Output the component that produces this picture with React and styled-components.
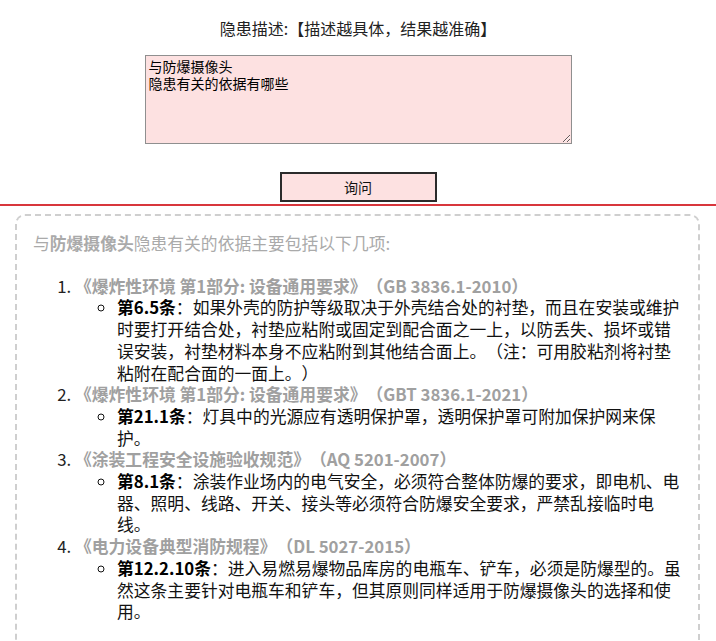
import styled, { createGlobalStyle } from "styled-components";

const GlobalStyle = createGlobalStyle`
body{
  margin: 0;
  background: #fff;
  color: #111;
  font-family: "Noto Sans CJK SC", "Noto Sans", sans-serif;
  text-spacing-trim: space-all;
}
`

const Header = styled.div`
display: flex;
flex-direction: column;
align-items: center;
padding-top: 18px;
padding-bottom: 2px;
border-bottom: 2px solid #d8363c;
`

const Title = styled.h1`
margin: 0;
font-size: 16px;
line-height: 20px;
font-weight: 400;
color: #222;
`

const Question = styled.textarea`
box-sizing: border-box;
margin-top: 17px;
width: 427px;
height: 89px;
padding: 2px 3px;
border: 1px solid #8f8f8f;
background: #fde1e1;
color: #000;
font-family: inherit;
font-size: 14px;
line-height: 16.5px;
resize: both;
outline: none;
`

const AskButton = styled.button`
box-sizing: border-box;
margin-top: 28px;
width: 157px;
height: 30px;
border: 2px solid #2b2b2b;
background: #fde1e1;
color: #111;
font-family: inherit;
font-size: 14px;
cursor: pointer;
`

const Answer = styled.div`
margin: 8px 16px 0 15px;
padding: 17px 15px 40px 16px;
border: 2px dashed #cfcfcf;
border-radius: 10px;
font-size: 16.8px;
line-height: 21.7px;
`

const Intro = styled.p`
margin: 0 0 21px;
color: #aaa;

b{
    font-weight: 700;
}
`

const Laws = styled.ol`
margin: 0;
padding-left: 42px;
color: #222;
`

const LawName = styled.span`
font-weight: 700;
color: #a0a0a0;
`

const Clauses = styled.ul`
margin: 0;
padding-left: 42px;
list-style: circle;
color: #111;
`

const ClauseNo = styled.b`
font-weight: 700;
color: #000;
`

const laws = [
    {
        name: '《爆炸性环境 第1部分: 设备通用要求》（GB 3836.1-2010）',
        no: '第6.5条',
        text: '如果外壳的防护等级取决于外壳结合处的衬垫，而且在安装或维护时要打开结合处，衬垫应粘附或固定到配合面之一上，以防丢失、损坏或错误安装，衬垫材料本身不应粘附到其他结合面上。（注：可用胶粘剂将衬垫粘附在配合面的一面上。）'
    },
    {
        name: '《爆炸性环境 第1部分: 设备通用要求》（GBT 3836.1-2021）',
        no: '第21.1条',
        text: '灯具中的光源应有透明保护罩，透明保护罩可附加保护网来保护。'
    },
    {
        name: '《涂装工程安全设施验收规范》（AQ 5201-2007）',
        no: '第8.1条',
        text: '涂装作业场内的电气安全，必须符合整体防爆的要求，即电机、电器、照明、线路、开关、接头等必须符合防爆安全要求，严禁乱接临时电线。'
    },
    {
        name: '《电力设备典型消防规程》（DL 5027-2015）',
        no: '第12.2.10条',
        text: '进入易燃易爆物品库房的电瓶车、铲车，必须是防爆型的。虽然这条主要针对电瓶车和铲车，但其原则同样适用于防爆摄像头的选择和使用。'
    }
]

const App = () => {
    return (
        <>
            <GlobalStyle />
            <Header>
                <Title>隐患描述:【描述越具体，结果越准确】</Title>
                <Question defaultValue={'与防爆摄像头\n隐患有关的依据有哪些'} />
                <AskButton>询问</AskButton>
            </Header>
            <Answer>
                <Intro>与<b>防爆摄像头</b>隐患有关的依据主要包括以下几项:</Intro>
                <Laws>
                    {laws.map((law) => (
                        <li key={law.name}>
                            <LawName>{law.name}</LawName>
                            <Clauses>
                                <li>
                                    <ClauseNo>{law.no}</ClauseNo>：{law.text}
                                </li>
                            </Clauses>
                        </li>
                    ))}
                </Laws>
            </Answer>
        </>
    )
}

export default App
